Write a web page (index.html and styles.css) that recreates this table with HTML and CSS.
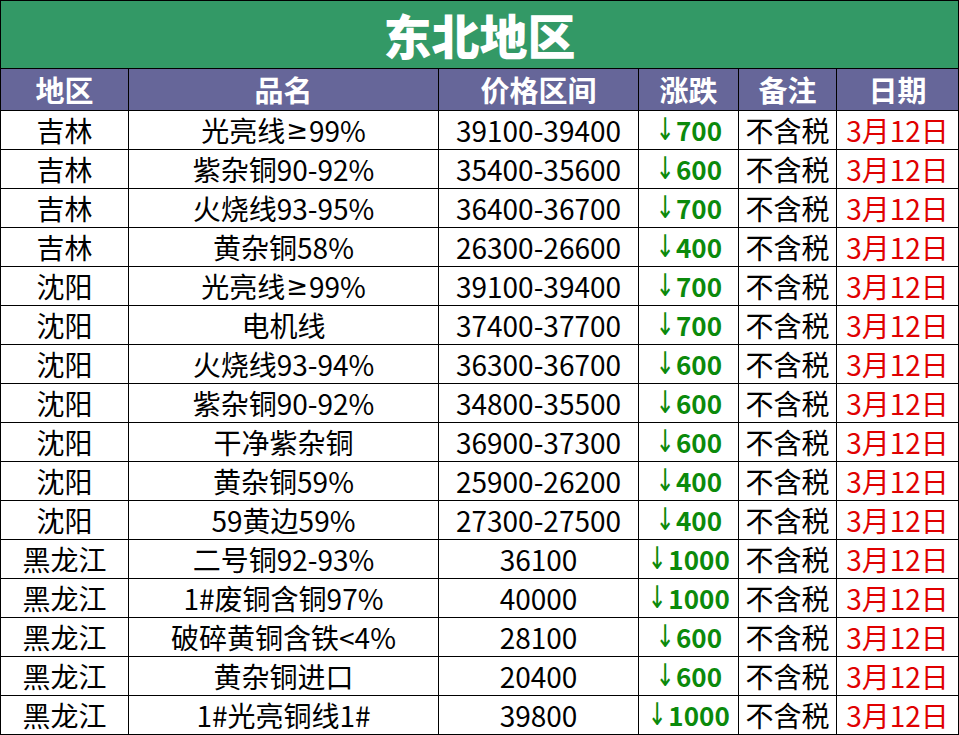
FILE: index.html
```html
<!DOCTYPE html>
<html lang="zh">
<head>
<meta charset="utf-8">
<title>东北地区</title>
<link rel="stylesheet" href="styles.css">
</head>
<body>
<div class="sheet">
  <div class="title">东北地区</div>
  <div class="hd">地区</div><div class="hd">品名</div><div class="hd">价格区间</div><div class="hd">涨跌</div><div class="hd">备注</div><div class="hd">日期</div>

  <div class="cell">吉林</div><div class="cell">光亮线<span class="ge">≥</span>99%</div><div class="cell">39100-39400</div><div class="cell chg"><span class="arr">↓</span>700</div><div class="cell">不含税</div><div class="cell date">3月12日</div>
  <div class="cell">吉林</div><div class="cell">紫杂铜90-92%</div><div class="cell">35400-35600</div><div class="cell chg"><span class="arr">↓</span>600</div><div class="cell">不含税</div><div class="cell date">3月12日</div>
  <div class="cell">吉林</div><div class="cell">火烧线93-95%</div><div class="cell">36400-36700</div><div class="cell chg"><span class="arr">↓</span>700</div><div class="cell">不含税</div><div class="cell date">3月12日</div>
  <div class="cell">吉林</div><div class="cell">黄杂铜58%</div><div class="cell">26300-26600</div><div class="cell chg"><span class="arr">↓</span>400</div><div class="cell">不含税</div><div class="cell date">3月12日</div>
  <div class="cell">沈阳</div><div class="cell">光亮线<span class="ge">≥</span>99%</div><div class="cell">39100-39400</div><div class="cell chg"><span class="arr">↓</span>700</div><div class="cell">不含税</div><div class="cell date">3月12日</div>
  <div class="cell">沈阳</div><div class="cell">电机线</div><div class="cell">37400-37700</div><div class="cell chg"><span class="arr">↓</span>700</div><div class="cell">不含税</div><div class="cell date">3月12日</div>
  <div class="cell">沈阳</div><div class="cell">火烧线93-94%</div><div class="cell">36300-36700</div><div class="cell chg"><span class="arr">↓</span>600</div><div class="cell">不含税</div><div class="cell date">3月12日</div>
  <div class="cell">沈阳</div><div class="cell">紫杂铜90-92%</div><div class="cell">34800-35500</div><div class="cell chg"><span class="arr">↓</span>600</div><div class="cell">不含税</div><div class="cell date">3月12日</div>
  <div class="cell">沈阳</div><div class="cell">干净紫杂铜</div><div class="cell">36900-37300</div><div class="cell chg"><span class="arr">↓</span>600</div><div class="cell">不含税</div><div class="cell date">3月12日</div>
  <div class="cell">沈阳</div><div class="cell">黄杂铜59%</div><div class="cell">25900-26200</div><div class="cell chg"><span class="arr">↓</span>400</div><div class="cell">不含税</div><div class="cell date">3月12日</div>
  <div class="cell">沈阳</div><div class="cell">59黄边59%</div><div class="cell">27300-27500</div><div class="cell chg"><span class="arr">↓</span>400</div><div class="cell">不含税</div><div class="cell date">3月12日</div>
  <div class="cell">黑龙江</div><div class="cell">二号铜92-93%</div><div class="cell">36100</div><div class="cell chg"><span class="arr">↓</span>1000</div><div class="cell">不含税</div><div class="cell date">3月12日</div>
  <div class="cell">黑龙江</div><div class="cell">1#废铜含铜97%</div><div class="cell">40000</div><div class="cell chg"><span class="arr">↓</span>1000</div><div class="cell">不含税</div><div class="cell date">3月12日</div>
  <div class="cell">黑龙江</div><div class="cell">破碎黄铜含铁&lt;4%</div><div class="cell">28100</div><div class="cell chg"><span class="arr">↓</span>600</div><div class="cell">不含税</div><div class="cell date">3月12日</div>
  <div class="cell">黑龙江</div><div class="cell">黄杂铜进口</div><div class="cell">20400</div><div class="cell chg"><span class="arr">↓</span>600</div><div class="cell">不含税</div><div class="cell date">3月12日</div>
  <div class="cell">黑龙江</div><div class="cell">1#光亮铜线1#</div><div class="cell">39800</div><div class="cell chg"><span class="arr">↓</span>1000</div><div class="cell">不含税</div><div class="cell date">3月12日</div>
</div>
</body>
</html>
```

FILE: styles.css
```css
html, body {
  margin: 0;
  padding: 0;
  background: #ffffff;
}
.sheet {
  display: grid;
  grid-template-columns: 128px 310px 200px 100px 98px 122px;
  grid-template-rows: 68px 42px repeat(16, 39px);
  width: 959px;
  box-sizing: border-box;
  border-left: 1px solid #000;
  border-top: 1px solid #000;
  font-family: "Noto Sans CJK SC", "Noto Sans", sans-serif;
  color: #000;
}
.title, .hd, .cell {
  box-sizing: border-box;
  border-right: 1px solid #000;
  border-bottom: 1px solid #000;
  display: flex;
  align-items: center;
  justify-content: center;
  white-space: nowrap;
}
.hd, .cell {
  overflow: hidden;
}
.title {
  grid-column: 1 / -1;
  background: #339966;
  color: #fff;
  font-size: 48px;
  font-weight: 900;
  line-height: 1.2;
}
.hd {
  background: #666699;
  color: #fff;
  font-size: 29px;
  font-weight: 700;
  line-height: 1;
}
.cell {
  font-size: 28px;
  line-height: 1;
}
.ge {
  font-family: "DejaVu Sans", sans-serif;
  font-size: 26px;
  line-height: 1;
  margin: 0 1px;
}
.chg {
  color: #0b8a0b;
  font-weight: 700;
  font-size: 26px;
}
.arr {
  display: inline-block;
  font-weight: 400;
  font-family: "DejaVu Sans", sans-serif;
  font-size: 24px;
  line-height: 1;
  transform: scale(0.95, 1.3);
  transform-origin: center 55%;
  margin-right: 1px;
}
.date {
  color: #e00000;
}
```
